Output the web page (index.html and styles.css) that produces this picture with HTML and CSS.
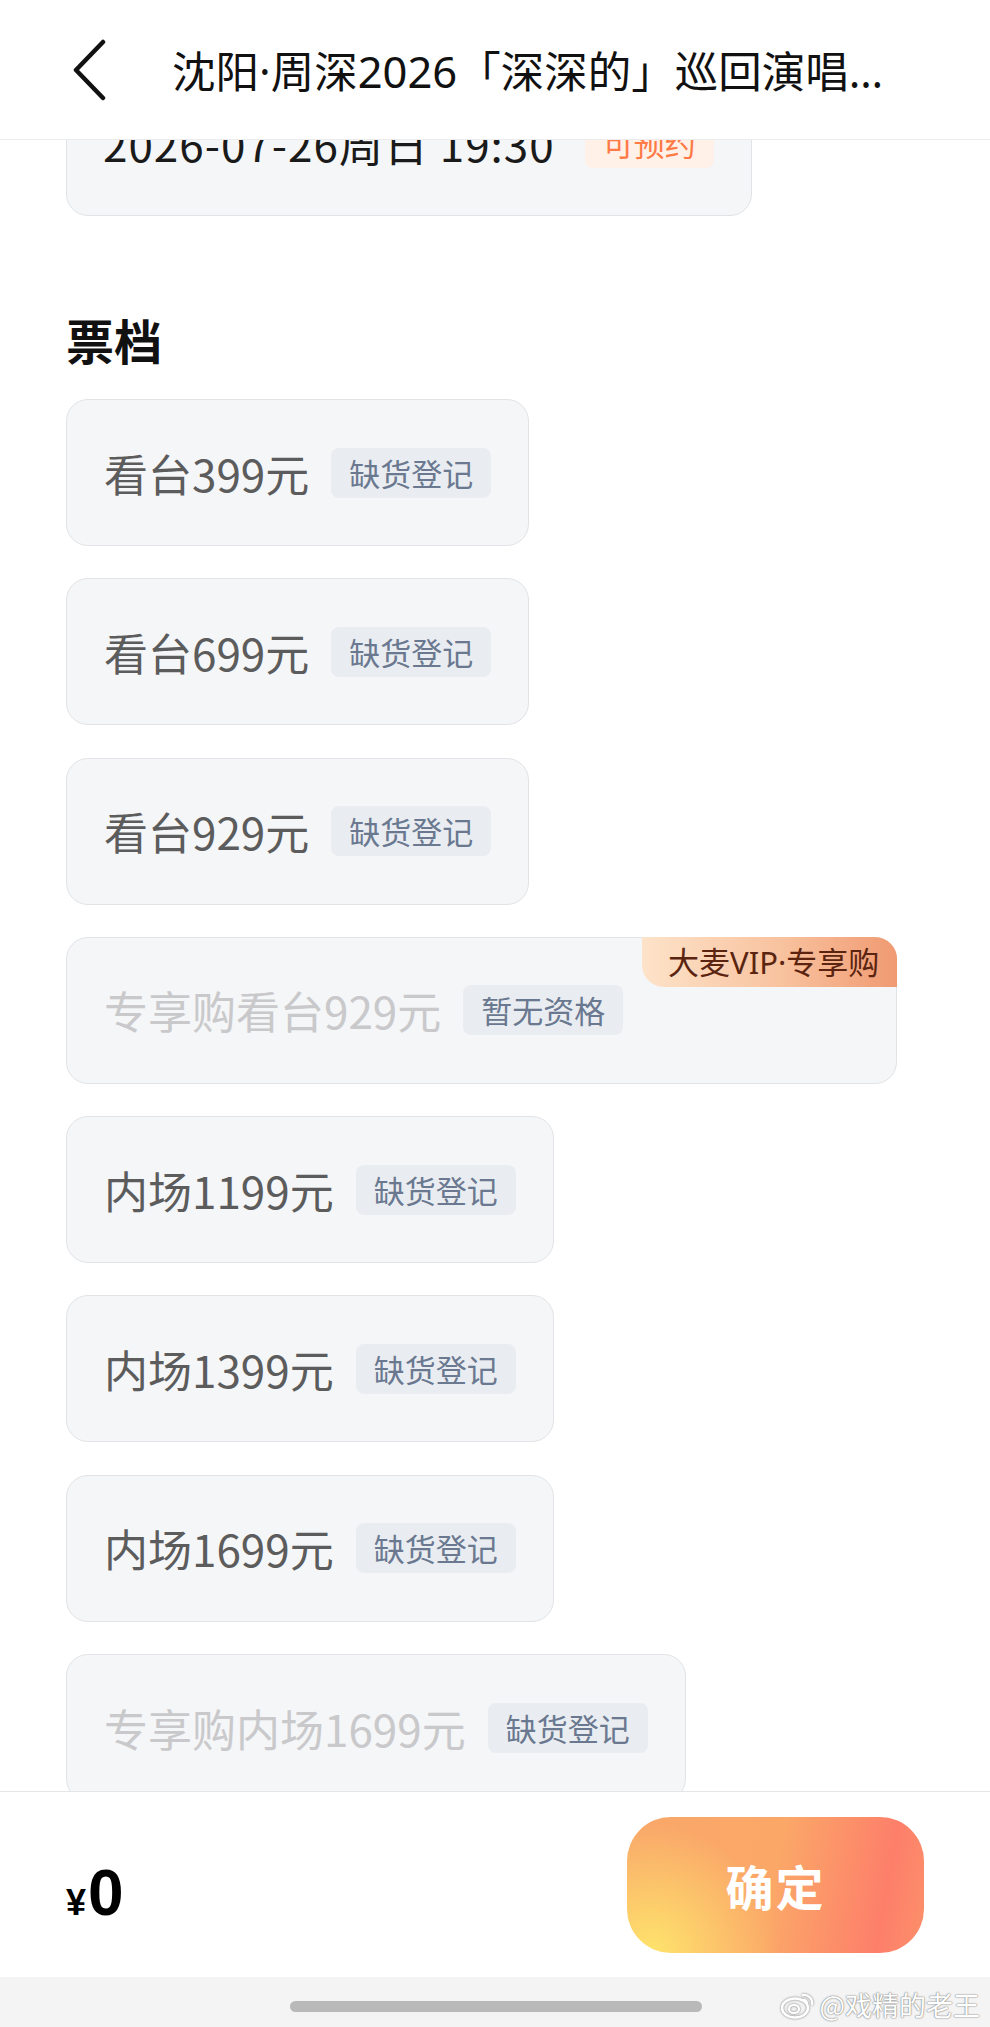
FILE: index.html
```html
<!DOCTYPE html>
<html lang="zh-CN">
<head>
  <meta charset="UTF-8">
  <title>选择票档</title>
  <meta name="viewport" content="width=device-width, initial-scale=1.0">
  <link rel="stylesheet" href="styles.css">
</head>
<body>
  <div class="phone">
    <header class="nav">
      <svg class="back" width="36" height="62" viewBox="0 0 36 62">
        <polyline points="31,3 4,31 31,59" fill="none" stroke="#111" stroke-width="4.5" stroke-linecap="round" stroke-linejoin="round"/>
      </svg>
      <h1 class="nav-title">沈阳·周深2026「深深的」巡回演唱会</h1>
    </header>

    <main class="scroll">
      <div class="session">
        <span class="session-time">2026-07-26周日 19:30</span>
        <span class="tag tag-orange">可预约</span>
      </div>

      <h2 class="section-title">票档</h2>

      <div class="tickets">
        <div class="ticket"><span class="price">看台399元</span><span class="tag">缺货登记</span></div>
        <div class="ticket"><span class="price">看台699元</span><span class="tag">缺货登记</span></div>
        <div class="ticket"><span class="price">看台929元</span><span class="tag">缺货登记</span></div>
        <div class="ticket ticket-vip">
          <span class="price muted">专享购看台929元</span><span class="tag">暂无资格</span>
          <span class="vip-badge">大麦VIP·专享购</span>
        </div>
        <div class="ticket"><span class="price">内场1199元</span><span class="tag">缺货登记</span></div>
        <div class="ticket"><span class="price">内场1399元</span><span class="tag">缺货登记</span></div>
        <div class="ticket"><span class="price">内场1699元</span><span class="tag">缺货登记</span></div>
        <div class="ticket"><span class="price muted">专享购内场1699元</span><span class="tag">缺货登记</span></div>
      </div>
    </main>

    <footer class="bar">
      <div class="total"><span class="yen">¥</span>0</div>
      <button class="confirm">确定</button>
    </footer>

    <div class="home-area">
      <div class="home-indicator"></div>
      <div class="watermark">
        <svg width="34" height="28" viewBox="0 0 34 28">
          <ellipse cx="14" cy="17" rx="13" ry="9.5" fill="none" stroke="#fff" stroke-width="2.6"/>
          <ellipse cx="13" cy="18" rx="5" ry="4" fill="none" stroke="#fff" stroke-width="2.2"/>
          <path d="M22 4 a8 8 0 0 1 9 9" fill="none" stroke="#fff" stroke-width="2.4" stroke-linecap="round"/>
          <path d="M22 9 a3.5 3.5 0 0 1 4 4" fill="none" stroke="#fff" stroke-width="2.2" stroke-linecap="round"/>
        </svg>
        <span>@戏精的老王</span>
      </div>
    </div>
  </div>
</body>
</html>
```

FILE: styles.css
```css
* { box-sizing: border-box; }
body { margin: 0; background: #fff; font-family: "Noto Sans CJK SC", "Noto Sans", sans-serif; color: #111; }
.phone { width: 990px; height: 2027px; overflow: hidden; display: flex; flex-direction: column; }

.nav { height: 140px; flex-shrink: 0; display: flex; align-items: center; padding-left: 72px; border-bottom: 1px solid #ececec; background: #fff; }
.back { flex-shrink: 0; margin-right: 64px; }
.nav-title { margin: 0; font-family: "Noto Sans", "Noto Sans CJK SC", sans-serif; font-size: 43.5px; font-weight: 400; color: #111; white-space: nowrap; overflow: hidden; text-overflow: ellipsis; max-width: 714px; }

.scroll { height: 1651px; flex-shrink: 0; overflow: hidden; padding: 0 66px; }
.session { margin-top: -71px; width: 686px; height: 147px; border: 1px solid #e2e3e6; border-radius: 22px; background: #f5f6f8; display: flex; align-items: center; padding-left: 36px; gap: 30px; }
.session-time { font-size: 44px; letter-spacing: 1px; color: #1a1a1a; }
.tag-orange { background: #fff0e8 !important; color: #ff7a45 !important; }

.section-title { margin: 93px 0 30px; font-size: 48px; line-height: 60px; font-weight: 700; color: #111; }

.tickets { display: flex; flex-direction: column; align-items: flex-start; gap: 32.3px; }
.ticket { position: relative; height: 147px; display: inline-flex; align-items: center; gap: 22px; padding: 0 37px; background: #f5f6f8; border: 1px solid #e2e3e6; border-radius: 22px; }
.price { font-size: 44px; color: #5c5c5c; white-space: nowrap; }
.price.muted { color: #c9c9cb; }
.tag { height: 50px; line-height: 50px; padding: 0 18px; border-radius: 8px; background: #e9edf1; color: #6a7890; font-size: 31px; white-space: nowrap; }
.ticket-vip { padding-right: 273px; }
.vip-badge { position: absolute; top: -1px; right: -1px; height: 50px; line-height: 50px; padding: 0 18px 0 26px; font-family: "Noto Sans", "Noto Sans CJK SC", sans-serif; font-size: 31px; color: #5a2410; border-radius: 0 22px 0 22px; background: linear-gradient(90deg, #fde3c9 0%, #f8c29e 55%, #f09a72 100%); white-space: nowrap; }

.bar { height: 186px; flex-shrink: 0; border-top: 1px solid #e6e6e6; background: #fff; display: flex; align-items: center; justify-content: space-between; padding: 0 66px; }
.total { padding-top: 16px; font-size: 64px; font-weight: 900; color: #000; font-family: "Liberation Sans", "Noto Sans", sans-serif; display: flex; align-items: baseline; }
.yen { font-size: 36px; margin-right: 2px; }
.confirm { width: 297px; height: 136px; border: none; border-radius: 44px; color: #fff; font-size: 48px; font-weight: 700; font-family: "Noto Sans CJK SC", sans-serif; letter-spacing: 2px;
  background: radial-gradient(circle at 8% 100%, #fee46c 0, rgba(254, 228, 108, 0) 42%), linear-gradient(100deg, #f9a86a 0%, #fba768 50%, #fd7f6a 85%, #fc906a 100%); }

.home-area { position: relative; flex: 1; background: #f4f4f4; }
.home-indicator { width: 412px; height: 11px; border-radius: 6px; background: #b9b9b9; margin: 24px 0 0 290px; }
.watermark { position: absolute; right: 10px; top: 8px; display: flex; align-items: center; gap: 4px; color: #fff; font-size: 27px; text-shadow: 0 0 2px #888, 0 0 1px #666; }
.watermark svg { filter: drop-shadow(0 0 1px #777); }
```
